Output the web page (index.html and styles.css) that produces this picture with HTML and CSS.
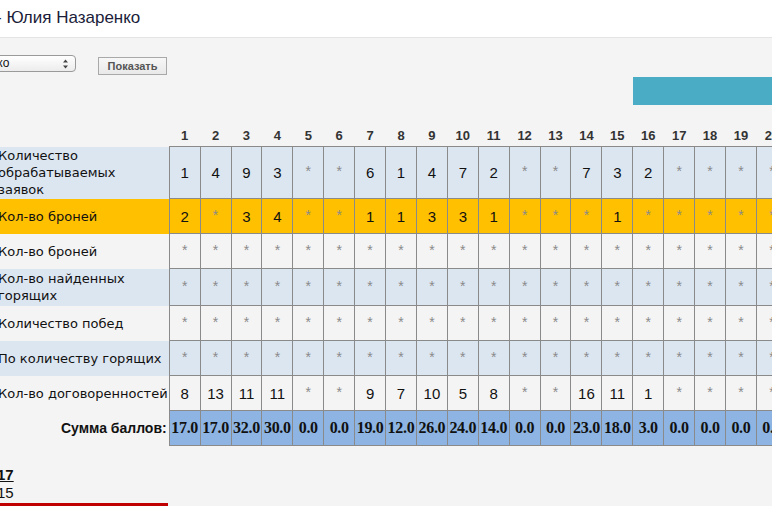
FILE: index.html
```html
<!DOCTYPE html>
<html lang="ru">
<head>
<meta charset="utf-8">
<title>Юлия Назаренко</title>
<link rel="stylesheet" href="styles.css">
</head>
<body>
<div class="topbar">
  <h1 class="title">- Юлия Назаренко</h1>
</div>
<div class="page">
  <div class="controls">
    <div class="select">
      <span class="select-text">Назаренко</span>
      <svg class="select-arrows" width="7" height="10" viewBox="0 0 7 10"><path d="M3.5 0.5 L6 3.5 H1 Z M3.5 9.5 L6 6.5 H1 Z" fill="#444"/></svg>
    </div>
    <button class="btn" type="button">Показать</button>
  </div>
  <div class="bar-row"><div class="bar"></div></div>
  <div class="table-wrap">
    <table class="stats">
      <thead>
        <tr>
          <th class="lbl"></th>
          <th>1</th><th>2</th><th>3</th><th>4</th><th>5</th><th>6</th><th>7</th><th>8</th><th>9</th><th>10</th><th>11</th><th>12</th><th>13</th><th>14</th><th>15</th><th>16</th><th>17</th><th>18</th><th>19</th><th>20</th><th>21</th>
        </tr>
      </thead>
      <tbody>
        <tr class="blue three-line">
          <td class="lbl">Количество<br>обрабатываемых<br>заявок</td>
          <td>1</td><td>4</td><td>9</td><td>3</td><td><span class="s">*</span></td><td><span class="s">*</span></td><td>6</td><td>1</td><td>4</td><td>7</td><td>2</td><td><span class="s">*</span></td><td><span class="s">*</span></td><td>7</td><td>3</td><td>2</td><td><span class="s">*</span></td><td><span class="s">*</span></td><td><span class="s">*</span></td><td><span class="s">*</span></td><td><span class="s">*</span></td>
        </tr>
        <tr class="yellow">
          <td class="lbl">Кол-во броней</td>
          <td>2</td><td><span class="s">*</span></td><td>3</td><td>4</td><td><span class="s">*</span></td><td><span class="s">*</span></td><td>1</td><td>1</td><td>3</td><td>3</td><td>1</td><td><span class="s">*</span></td><td><span class="s">*</span></td><td><span class="s">*</span></td><td>1</td><td><span class="s">*</span></td><td><span class="s">*</span></td><td><span class="s">*</span></td><td><span class="s">*</span></td><td><span class="s">*</span></td><td><span class="s">*</span></td>
        </tr>
        <tr>
          <td class="lbl">Кол-во броней</td>
          <td><span class="s">*</span></td><td><span class="s">*</span></td><td><span class="s">*</span></td><td><span class="s">*</span></td><td><span class="s">*</span></td><td><span class="s">*</span></td><td><span class="s">*</span></td><td><span class="s">*</span></td><td><span class="s">*</span></td><td><span class="s">*</span></td><td><span class="s">*</span></td><td><span class="s">*</span></td><td><span class="s">*</span></td><td><span class="s">*</span></td><td><span class="s">*</span></td><td><span class="s">*</span></td><td><span class="s">*</span></td><td><span class="s">*</span></td><td><span class="s">*</span></td><td><span class="s">*</span></td><td><span class="s">*</span></td>
        </tr>
        <tr class="blue two-line">
          <td class="lbl">Кол-во найденных<br>горящих</td>
          <td><span class="s">*</span></td><td><span class="s">*</span></td><td><span class="s">*</span></td><td><span class="s">*</span></td><td><span class="s">*</span></td><td><span class="s">*</span></td><td><span class="s">*</span></td><td><span class="s">*</span></td><td><span class="s">*</span></td><td><span class="s">*</span></td><td><span class="s">*</span></td><td><span class="s">*</span></td><td><span class="s">*</span></td><td><span class="s">*</span></td><td><span class="s">*</span></td><td><span class="s">*</span></td><td><span class="s">*</span></td><td><span class="s">*</span></td><td><span class="s">*</span></td><td><span class="s">*</span></td><td><span class="s">*</span></td>
        </tr>
        <tr>
          <td class="lbl">Количество побед</td>
          <td><span class="s">*</span></td><td><span class="s">*</span></td><td><span class="s">*</span></td><td><span class="s">*</span></td><td><span class="s">*</span></td><td><span class="s">*</span></td><td><span class="s">*</span></td><td><span class="s">*</span></td><td><span class="s">*</span></td><td><span class="s">*</span></td><td><span class="s">*</span></td><td><span class="s">*</span></td><td><span class="s">*</span></td><td><span class="s">*</span></td><td><span class="s">*</span></td><td><span class="s">*</span></td><td><span class="s">*</span></td><td><span class="s">*</span></td><td><span class="s">*</span></td><td><span class="s">*</span></td><td><span class="s">*</span></td>
        </tr>
        <tr class="blue">
          <td class="lbl">По количеству горящих</td>
          <td><span class="s">*</span></td><td><span class="s">*</span></td><td><span class="s">*</span></td><td><span class="s">*</span></td><td><span class="s">*</span></td><td><span class="s">*</span></td><td><span class="s">*</span></td><td><span class="s">*</span></td><td><span class="s">*</span></td><td><span class="s">*</span></td><td><span class="s">*</span></td><td><span class="s">*</span></td><td><span class="s">*</span></td><td><span class="s">*</span></td><td><span class="s">*</span></td><td><span class="s">*</span></td><td><span class="s">*</span></td><td><span class="s">*</span></td><td><span class="s">*</span></td><td><span class="s">*</span></td><td><span class="s">*</span></td>
        </tr>
        <tr>
          <td class="lbl">Кол-во договоренностей</td>
          <td>8</td><td>13</td><td>11</td><td>11</td><td><span class="s">*</span></td><td><span class="s">*</span></td><td>9</td><td>7</td><td>10</td><td>5</td><td>8</td><td><span class="s">*</span></td><td><span class="s">*</span></td><td>16</td><td>11</td><td>1</td><td><span class="s">*</span></td><td><span class="s">*</span></td><td><span class="s">*</span></td><td><span class="s">*</span></td><td><span class="s">*</span></td>
        </tr>
        <tr class="sum">
          <td class="lbl">Сумма баллов:</td>
          <td>17.0</td><td>17.0</td><td>32.0</td><td>30.0</td><td>0.0</td><td>0.0</td><td>19.0</td><td>12.0</td><td>26.0</td><td>24.0</td><td>14.0</td><td>0.0</td><td>0.0</td><td>23.0</td><td>18.0</td><td>3.0</td><td>0.0</td><td>0.0</td><td>0.0</td><td>0.0</td><td>0.0</td>
        </tr>
      </tbody>
    </table>
  </div>
  <div class="totals">
    <div class="total-main">17</div>
    <div class="total-sub">15</div>
    <div class="redline"></div>
  </div>
</div>
</body>
</html>
```

FILE: styles.css
```css
html, body {
  margin: 0;
  padding: 0;
  overflow: hidden;
}
body {
  background: #f4f4f4;
  font-family: "DejaVu Sans", sans-serif;
  color: #111;
  width: 772px;
  height: 506px;
}
.topbar {
  background: #ffffff;
  height: 37px;
  border-bottom: 1px solid #e4e4e4;
  overflow: hidden;
}
.title {
  margin: 0 0 0 -4px;
  font-family: "Liberation Sans", sans-serif;
  font-weight: normal;
  font-size: 17px;
  line-height: 36px;
  color: #1b1d3a;
  white-space: nowrap;
}
.page {
  margin-left: -6px;
}
.controls {
  display: flex;
  align-items: flex-start;
  margin-top: 17px;
  height: 21px;
}
.select {
  box-sizing: border-box;
  margin-left: -49px;
  width: 131px;
  height: 17px;
  border: 1px solid #9a9a9a;
  border-radius: 4px;
  background: linear-gradient(#ffffff, #ececec);
  display: flex;
  align-items: center;
  justify-content: space-between;
  padding: 0 6px 0 4px;
}
.select-text {
  font-family: "Liberation Sans", sans-serif;
  font-size: 12px;
  color: #111;
  line-height: 15px;
}
.select-arrows {
  display: block;
}
.btn {
  box-sizing: border-box;
  margin: 2px 0 0 22px;
  width: 69px;
  height: 18px;
  border: 1px solid #a9a9a9;
  background: linear-gradient(#f7f7f7, #e9e9e9);
  font-family: "Liberation Sans", sans-serif;
  font-weight: bold;
  font-size: 11px;
  color: #555;
  padding: 0;
  line-height: 16px;
}
.bar-row {
  display: flex;
  justify-content: flex-end;
  margin-top: 1px;
}
.bar {
  width: 139px;
  height: 28px;
  background: #4bacc6;
}
.table-wrap {
  margin-top: 20px;
  overflow: hidden;
}
.stats {
  border-collapse: collapse;
  table-layout: fixed;
  width: 825px;
}
.stats th {
  width: 30px;
  height: 21px;
  padding: 0;
  font-family: "Liberation Sans", sans-serif;
  font-weight: bold;
  font-size: 13px;
  color: #333;
  text-align: center;
  vertical-align: middle;
}
.stats th.lbl, .stats td.lbl {
  width: 170px;
  border: none;
}
.stats td {
  width: 30px;
  height: 34px;
  padding: 0;
  border: 1px solid #8a8a8a;
  text-align: center;
  vertical-align: middle;
  font-family: "Liberation Sans", sans-serif;
  font-size: 15px;
  color: #111;
}
.stats .two-line td {
  height: 36px;
}
.stats .three-line td {
  height: 51px;
}
.stats td.lbl {
  text-align: left;
  padding: 0 0 0 4px;
  font-family: "DejaVu Sans", sans-serif;
  font-size: 13px;
  line-height: 17px;
  white-space: nowrap;
  color: #111;
}
.s {
  font-size: 14px;
  color: #8a8a8a;
  position: relative;
  top: -2px;
}
.blue {
  background: #dce6f1;
}
.yellow {
  background: #ffc000;
}
.sum td {
  background: #8db4e2;
  font-family: "Liberation Serif", serif;
  font-weight: bold;
  font-size: 16px;
  letter-spacing: -0.3px;
  color: #111;
}
.sum td.lbl {
  background: transparent;
  text-align: right;
  padding: 0 2px 0 0;
  font-family: "Liberation Sans", sans-serif;
  font-weight: bold;
  font-size: 14px;
  letter-spacing: 0;
}
.totals {
  margin-top: 20px;
}
.total-main {
  font-family: "Liberation Sans", sans-serif;
  font-weight: bold;
  font-size: 15px;
  line-height: 18px;
  text-decoration: underline;
  margin-left: 3px;
}
.total-sub {
  font-family: "Liberation Sans", sans-serif;
  font-size: 15px;
  line-height: 18px;
  margin-left: 3px;
}
.redline {
  margin-top: 1px;
  width: 174px;
  height: 5px;
  background: #c00000;
}
```
